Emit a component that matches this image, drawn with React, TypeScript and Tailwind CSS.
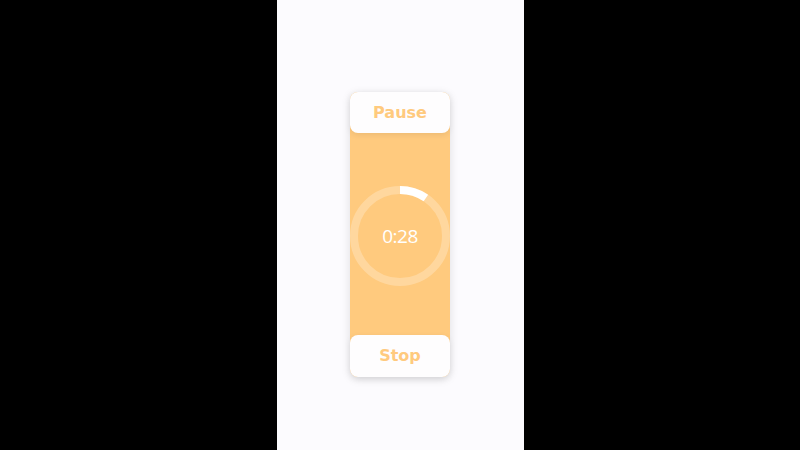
export default function App() {
  const r = 46;
  const c = 2 * Math.PI * r;
  const progress = 0.095;
  return (
    <div className="flex h-[450px] w-full justify-center bg-black">
      <div className="flex h-full w-[247px] items-start justify-center bg-[#fcfbfe] pt-[92px]">
        <div className="flex h-[285px] w-[100px] flex-col rounded-lg bg-[#ffca7e] shadow-[0_2px_10px_rgba(0,0,0,0.12)]">
          <button className="h-[41px] shrink-0 rounded-lg bg-[#fefdfe] text-[16px] font-bold text-[#ffca7e] shadow-[0_2px_6px_rgba(0,0,0,0.08)] [font-family:'DejaVu_Sans',sans-serif]">
            Pause
          </button>
          <div className="relative flex flex-1 items-center justify-center pt-[3px]">
            <svg width="100" height="100" viewBox="0 0 100 100">
              <circle cx="50" cy="50" r={r} fill="none" stroke="rgba(255,255,255,0.25)" strokeWidth="8" />
              <circle
                cx="50"
                cy="50"
                r={r}
                fill="none"
                stroke="#ffffff"
                strokeWidth="8"
                strokeDasharray={`${c * progress} ${c}`}
                transform="rotate(-90 50 50)"
              />
            </svg>
            <span className="absolute inset-0 flex items-center justify-center pt-[4px] text-[19px] tracking-[-0.5px] text-white [font-family:'Open_Sans',sans-serif]">
              0:28
            </span>
          </div>
          <button className="h-[42px] shrink-0 rounded-lg bg-[#fefdfe] text-[16px] font-bold text-[#ffca7e] shadow-[0_2px_6px_rgba(0,0,0,0.08)] [font-family:'DejaVu_Sans',sans-serif]">
            Stop
          </button>
        </div>
      </div>
    </div>
  );
}
